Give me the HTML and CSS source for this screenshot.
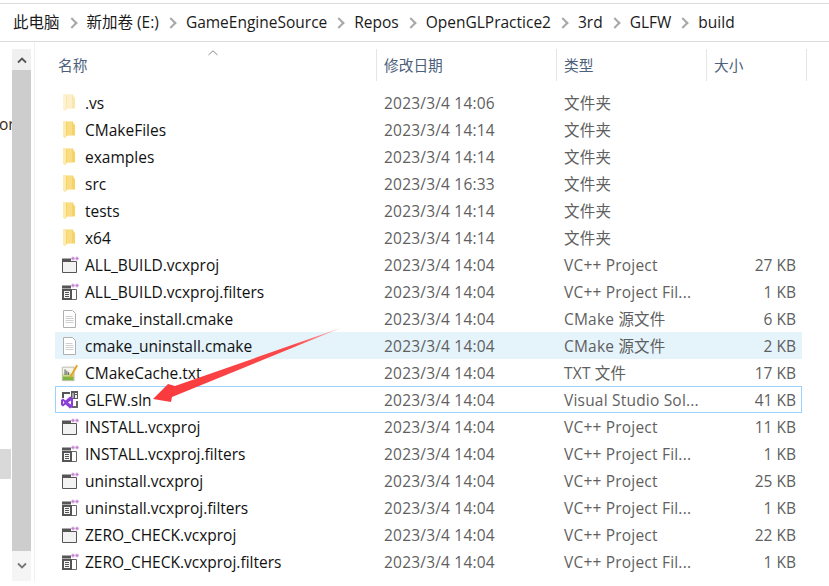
FILE: index.html
```html
<!doctype html>
<html lang="zh">
<head>
<meta charset="utf-8">
<title>build</title>
<link rel="stylesheet" href="styles.css">
</head>
<body>
<svg width="0" height="0" class="defs">
	<symbol id="folder" viewBox="0 0 18 18">
		<path d="M2 .5h10l1 3h1v11H6l-2 2.500-2-2z" fill="#f6d365"/>
		<path d="M2 .5h3v14l-1 2.500-2-2z" fill="#fdecae"/>
		<path d="M6 1h5v13H6z" fill="#f9dc83"/>
	</symbol>
	<symbol id="folderpale" viewBox="0 0 18 18">
		<path d="M2 .5h10l1 3h1v11H6l-2 2.500-2-2z" fill="#fbe7ac"/>
		<path d="M2 .5h3v14l-1 2.500-2-2z" fill="#fdf3d2"/>
		<path d="M6 1h5v13H6z" fill="#fdf0c8"/>
	</symbol>
	<symbol id="proj" viewBox="0 0 18 18">
		<path d="M1.500 5.500h14v11h-14z" fill="#f2f2f2" stroke="#555"/>
		<path d="M1 2.500h9v3.500H1z" fill="#555"/>
		<path d="M10.500 1.500h3v2h-3zM14.500 1.500h3v2h-3z" fill="#b967c9"/>
		<path d="M11.500.5h1v4h-1zM15.500.5h1v4h-1z" fill="#cf97da"/>
	</symbol>
	<symbol id="filt" viewBox="0 0 18 18">
		<path d="M1 2.500h9v3H1z" fill="#555"/>
		<path d="M10.500 1.500h3v2h-3zM14.500 1.500h3v2h-3z" fill="#b967c9"/>
		<path d="M11.500.5h1v4h-1zM15.500.5h1v4h-1z" fill="#cf97da"/>
		<path d="M11 6.500h4.500v10H11" fill="#fff" stroke="#666"/>
		<path d="M1 6h10v11H1z" fill="#555"/>
		<path d="M3 8h6v7H3z" fill="#f4f4f4"/>
		<path d="M4 9.500h4M4 11.500h4M4 13.500h4" stroke="#555"/>
	</symbol>
	<symbol id="doc" viewBox="0 0 18 18">
		<path d="M2.500 .5h9l3 3v14h-12z" fill="#fff" stroke="#b0b0b0"/>
		<path d="M4.500 6.500h7M4.500 8.500h8M4.500 10.500h8M4.500 12.500h8" stroke="#cfcfcf"/>
	</symbol>
	<symbol id="cache" viewBox="0 0 20 20">
		<path d="M1.500 3.500h13v15h-13z" fill="#f5f5ec" stroke="#b5b5a5"/>
		<path d="M2 11h12v7H2z" fill="#7fb53f"/>
		<path d="M2 11h12v3H2z" fill="#c6dc92"/>
		<path d="M4.500 6v6M6.500 7.500v4.500M8.500 9v3" stroke="#444"/>
		<path d="M10 15L18 1.500" stroke="#e9a51f" stroke-width="2.200"/>
	</symbol>
	<symbol id="sln" viewBox="0 0 18 18">
		<path d="M1 1h8v2H1zM1 3h2v4H1z" fill="#555"/>
		<path d="M10 0h7v8h-7z" fill="#5a5a5a"/>
		<path d="M11.500 2h1v5h-1zM14 2h2v1h-2zM14 4h2v3h-2z" fill="#eee"/>
		<path d="M11 15h6v2h-6zM15 10h2v5h-2z" fill="#666"/>
		<path d="M0 9l2-1.500 2.500 2L9 5.500l3 1.500v9l-3 1.500-4.500-4-2.500 2L0 14zM2 10v3l1.500-1.500zM7 11.500l3 2v-4z" fill="#8b3fd4" fill-rule="evenodd"/>
	</symbol>
</svg>

<div class="addr">
	<span class="crumb">此电脑</span><span class="sep"></span>
	<span class="crumb">新加卷 (E:)</span><span class="sep"></span>
	<span class="crumb">GameEngineSource</span><span class="sep"></span>
	<span class="crumb">Repos</span><span class="sep"></span>
	<span class="crumb">OpenGLPractice2</span><span class="sep"></span>
	<span class="crumb">3rd</span><span class="sep"></span>
	<span class="crumb">GLFW</span><span class="sep"></span>
	<span class="crumb">build</span>
</div>

<div class="main">
	<div class="nav">
		<div class="navitems">
			<div class="clipped">or</div>
			<div class="navsel"></div>
		</div>
		<div class="scroll">
			<div class="scrollbtn"><svg width="12" height="8" viewBox="0 0 12 8"><path d="M2 6.500l4-4 4 4" fill="none" stroke="#555" stroke-width="1.800"/></svg></div>
			<div class="thumb"></div>
			<div class="scrollbtn scrollbtn-down"><svg width="12" height="8" viewBox="0 0 12 8"><path d="M2 1.500l4 4 4-4" fill="none" stroke="#777" stroke-width="1.800"/></svg></div>
		</div>
	</div>

	<div class="list">
		<div class="sortmark"><svg width="10" height="6" viewBox="0 0 10 6"><path d="M.5 5L5 .8 9.500 5" fill="none" stroke="#888"/></svg></div>
		<div class="head">
			<div class="hcell">名称</div>
			<div class="hcell">修改日期</div>
			<div class="hcell">类型</div>
			<div class="hcell">大小</div>
		</div>
		<div class="rows">
			<div class="row"><svg class="ico"><use href="#folderpale"/></svg><span class="name">.vs</span><span class="cell">2023/3/4 14:06</span><span class="cell">文件夹</span><span class="size"></span></div>
			<div class="row"><svg class="ico"><use href="#folder"/></svg><span class="name">CMakeFiles</span><span class="cell">2023/3/4 14:14</span><span class="cell">文件夹</span><span class="size"></span></div>
			<div class="row"><svg class="ico"><use href="#folder"/></svg><span class="name">examples</span><span class="cell">2023/3/4 14:14</span><span class="cell">文件夹</span><span class="size"></span></div>
			<div class="row"><svg class="ico"><use href="#folder"/></svg><span class="name">src</span><span class="cell">2023/3/4 16:33</span><span class="cell">文件夹</span><span class="size"></span></div>
			<div class="row"><svg class="ico"><use href="#folder"/></svg><span class="name">tests</span><span class="cell">2023/3/4 14:14</span><span class="cell">文件夹</span><span class="size"></span></div>
			<div class="row"><svg class="ico"><use href="#folder"/></svg><span class="name">x64</span><span class="cell">2023/3/4 14:14</span><span class="cell">文件夹</span><span class="size"></span></div>
			<div class="row"><svg class="ico"><use href="#proj"/></svg><span class="name">ALL_BUILD.vcxproj</span><span class="cell">2023/3/4 14:04</span><span class="cell">VC++ Project</span><span class="size">27 KB</span></div>
			<div class="row"><svg class="ico"><use href="#filt"/></svg><span class="name">ALL_BUILD.vcxproj.filters</span><span class="cell">2023/3/4 14:04</span><span class="cell">VC++ Project Fil...</span><span class="size">1 KB</span></div>
			<div class="row"><svg class="ico"><use href="#doc"/></svg><span class="name">cmake_install.cmake</span><span class="cell">2023/3/4 14:04</span><span class="cell">CMake 源文件</span><span class="size">6 KB</span></div>
			<div class="row row-hover"><svg class="ico"><use href="#doc"/></svg><span class="name">cmake_uninstall.cmake</span><span class="cell">2023/3/4 14:04</span><span class="cell">CMake 源文件</span><span class="size">2 KB</span></div>
			<div class="row"><svg class="ico"><use href="#cache"/></svg><span class="name">CMakeCache.txt</span><span class="cell">2023/3/4 14:04</span><span class="cell">TXT 文件</span><span class="size">17 KB</span></div>
			<div class="row row-sel"><svg class="ico"><use href="#sln"/></svg><span class="name">GLFW.sln</span><span class="cell">2023/3/4 14:04</span><span class="cell">Visual Studio Sol...</span><span class="size">41 KB</span></div>
			<div class="row"><svg class="ico"><use href="#proj"/></svg><span class="name">INSTALL.vcxproj</span><span class="cell">2023/3/4 14:04</span><span class="cell">VC++ Project</span><span class="size">11 KB</span></div>
			<div class="row"><svg class="ico"><use href="#filt"/></svg><span class="name">INSTALL.vcxproj.filters</span><span class="cell">2023/3/4 14:04</span><span class="cell">VC++ Project Fil...</span><span class="size">1 KB</span></div>
			<div class="row"><svg class="ico"><use href="#proj"/></svg><span class="name">uninstall.vcxproj</span><span class="cell">2023/3/4 14:04</span><span class="cell">VC++ Project</span><span class="size">25 KB</span></div>
			<div class="row"><svg class="ico"><use href="#filt"/></svg><span class="name">uninstall.vcxproj.filters</span><span class="cell">2023/3/4 14:04</span><span class="cell">VC++ Project Fil...</span><span class="size">1 KB</span></div>
			<div class="row"><svg class="ico"><use href="#proj"/></svg><span class="name">ZERO_CHECK.vcxproj</span><span class="cell">2023/3/4 14:04</span><span class="cell">VC++ Project</span><span class="size">22 KB</span></div>
			<div class="row"><svg class="ico"><use href="#filt"/></svg><span class="name">ZERO_CHECK.vcxproj.filters</span><span class="cell">2023/3/4 14:04</span><span class="cell">VC++ Project Fil...</span><span class="size">1 KB</span></div>
		</div>
	</div>
</div>

<!-- red annotation arrow -->
<svg class="arrow" width="829" height="586" viewBox="0 0 829 586">
	<defs>
		<linearGradient id="fade" x1="153" y1="398" x2="342" y2="328" gradientUnits="userSpaceOnUse">
			<stop offset="0" stop-color="#fa3a3c"/>
			<stop offset=".75" stop-color="#fb4a4c"/>
			<stop offset="1" stop-color="#fcc0c0"/>
		</linearGradient>
	</defs>
	<path d="M342 327.500L175 386 168 384 153 399 171 402 172 397z" fill="url(#fade)"/>
</svg>
</body>
</html>
```

FILE: styles.css
```css
* {margin:0; padding:0; box-sizing:border-box; }
html, body {height:586px; overflow:hidden; }
body {background:#fff; font:15.500px "Open Sans","Noto Sans CJK SC",sans-serif; color:#1a1a1a; position:relative; }
.defs {display:block; height:0; }

.addr {margin-top:3px; height:39px; border-top:1px solid #dcdcdc; border-bottom:1px solid #dcdcdc; display:flex; align-items:center; padding-bottom:2px; padding-left:13px; white-space:nowrap; }
.crumb {font-size:15.500px; line-height:20px; }
.sep {width:27px; height:20px; position:relative; flex:none; }
.sep::after {content:""; position:absolute; left:8px; top:7px; width:6px; height:6px; border-top:2px solid #a8a8a8; border-right:2px solid #a8a8a8; transform:rotate(45deg); }

.main {display:flex; height:544px; }
.nav {width:35px; height:539px; flex:none; display:flex; border-right:1px solid #f0f0f0; padding-top:7px; }
.navitems {width:12px; flex:none; overflow:hidden; }
.clipped {margin-top:65px; margin-left:-1px; line-height:20px; font-size:15.500px; color:#3a2a10; }
.navsel {margin-top:315px; height:30px; background:#d9d9d9; width:11px; }
.scroll {width:19px; display:flex; flex-direction:column; }
.scrollbtn {height:21px; background:#f0f0f0; display:flex; align-items:center; justify-content:center; flex:none; }
.scrollbtn-down {height:30px; background:#f5f5f5; }
.thumb {flex:1; background:#cdcdcd; }

.list {flex:1; min-width:0; position:relative; padding-left:20px; padding-right:27px; }
.sortmark {position:absolute; left:173px; top:8px; line-height:0; }
.head {display:grid; grid-template-columns:322px 180px 150px 100px; height:32px; margin-top:7px; width:752px; }
.hcell {padding-left:7px; border-right:1px solid #e5e5e5; font-size:14.700px; line-height:32px; color:#4c607a; }
.hcell:first-child {padding-left:3px; }

.rows {margin-top:8px; }
.row {display:grid; grid-template-columns:30px 299px 180px 150px 88px; grid-template-rows:27px; align-items:center; height:27px; }
.row-hover {background:#e5f3fb; }
.row-sel {background:#fff; outline:1px solid #99d1ff; outline-offset:-1px; }
.ico {width:18px; height:18px; margin-left:6px; }
.name, .cell, .size {line-height:27px; padding-top:2px; white-space:nowrap; }
.name {color:#111; }
.cell {color:#5f5f5f; letter-spacing:.2px; }
.size {color:#5f5f5f; text-align:right; padding-right:6px; }

.arrow {position:absolute; left:0; top:0; pointer-events:none; }
```
